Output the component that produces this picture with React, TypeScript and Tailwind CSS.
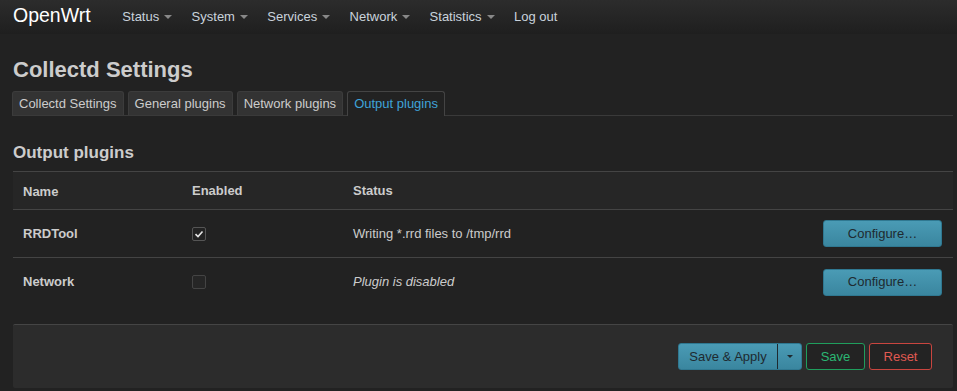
import React from "react";

const Caret = () => (
  <span className="ml-[5px] inline-block w-0 h-0 border-l-[4px] border-r-[4px] border-t-[4px] border-l-transparent border-r-transparent border-t-[#888] align-middle" />
);

const navItems = ["Status", "System", "Services", "Network", "Statistics"];

export default function App() {
  return (
    <div className="w-[957px] h-[391px] bg-[#222222] text-[#cccccc] overflow-hidden" style={{ fontFamily: '"Liberation Sans", Arial, sans-serif' }}>
      {/* navbar */}
      <div className="h-[34px] bg-gradient-to-b from-[#2c2c2c] to-[#1f1f1f] flex items-center px-[13px] text-[13px]">
        <span className="text-[19.5px] text-white mr-[22px] leading-none pb-[2px]">OpenWrt</span>
        <div className="flex items-center">
          {navItems.map((n) => (
            <span key={n} className="flex items-center px-[9.7px] text-[#c9d3dc]">
              {n}
              <Caret />
            </span>
          ))}
          <span className="px-[9.7px] text-[#c9d3dc]">Log out</span>
        </div>
      </div>

      <div className="pl-[13px] pr-[4px]">
        <h2 className="text-[22px] font-bold text-[#cccccc] mt-[22px] leading-[28px]">Collectd Settings</h2>
        {/* tabs */}
        <div className="flex items-end gap-[4px] mt-[6px] border-b border-[#3a3a3a] h-[26px] -ml-[1px]">
          {["Collectd Settings", "General plugins", "Network plugins"].map((t) => (
            <div key={t} className="h-[24px] px-[6px] flex items-center bg-[#333333] border border-[#3c3c3c] border-b-0 rounded-t-[3px] text-[13px] text-[#cccccc]">
              {t}
            </div>
          ))}
          <div className="h-[25px] px-[6px] flex items-center bg-[#222222] border border-[#444] border-b-0 rounded-t-[3px] text-[13px] text-[#3fa2d8] -mb-[1px]">
            Output plugins
          </div>
        </div>

        <h3 className="text-[17px] font-bold text-[#cccccc] mt-[27px] leading-[20px]">Output plugins</h3>

        {/* table */}
        <div className="mt-[8px] text-[13px]">
          <div className="h-[39px] flex items-center bg-[#262626] border-t border-[#444] border-b font-bold">
            <div className="w-[179px] pl-[10px] pt-[2px]">Name</div>
            <div className="w-[161px]">Enabled</div>
            <div>Status</div>
          </div>
          <div className="h-[48px] flex items-center border-b border-[#444]">
            <div className="w-[179px] pl-[10px] font-bold">RRDTool</div>
            <div className="w-[161px]">
              <div className="w-[14px] h-[14px] border border-[#555] rounded-[2px] flex items-center justify-center ml-[0px]">
                <svg width="10" height="10" viewBox="0 0 10 10"><path d="M1.5 5.2 L4 7.5 L8.5 2.5" stroke="#e6e6e6" strokeWidth="1.6" fill="none" /></svg>
              </div>
            </div>
            <div className="flex-1">Writing *.rrd files to /tmp/rrd</div>
            <button className="w-[119px] h-[27px] mr-[11px] rounded-[3px] bg-gradient-to-b from-[#4a9bb5] to-[#3a869f] border border-[#2f7891] text-[#1e2a30] text-[13px]">Configure…</button>
          </div>
          <div className="h-[48px] flex items-center">
            <div className="w-[179px] pl-[10px] font-bold">Network</div>
            <div className="w-[161px]">
              <div className="w-[14px] h-[14px] border border-[#444] rounded-[2px] bg-[#262626]" />
            </div>
            <div className="flex-1 italic">Plugin is disabled</div>
            <button className="w-[119px] h-[27px] mr-[11px] rounded-[3px] bg-gradient-to-b from-[#4a9bb5] to-[#3a869f] border border-[#2f7891] text-[#1e2a30] text-[13px]">Configure…</button>
          </div>
        </div>

        {/* footer */}
        <div className="mt-[18px] h-[64px] bg-[#2c2c2c] border-t border-[#454545] rounded-[2px] flex items-center justify-end pr-[21px] gap-[4px] text-[13px]">
          <div className="flex h-[27px] w-[124px] rounded-[3px] bg-gradient-to-b from-[#4a9bb5] to-[#3a869f] border border-[#2f7891] overflow-hidden">
            <span className="flex-1 flex items-center justify-center text-[#1e2a30]">Save &amp; Apply</span>
            <span className="w-[24px] border-l border-[#1e2a30] flex items-center justify-center">
              <span className="inline-block w-0 h-0 border-l-[3px] border-r-[3px] border-t-[3px] border-l-transparent border-r-transparent border-t-[#1e2a30]" />
            </span>
          </div>
          <button className="h-[27px] w-[59px] rounded-[3px] border border-[#1f9e5d] text-[#2bb673] bg-[#232323]">Save</button>
          <button className="h-[27px] w-[63px] rounded-[3px] border border-[#c9453f] text-[#e05a52] bg-[#232323]">Reset</button>
        </div>
      </div>
    </div>
  );
}
